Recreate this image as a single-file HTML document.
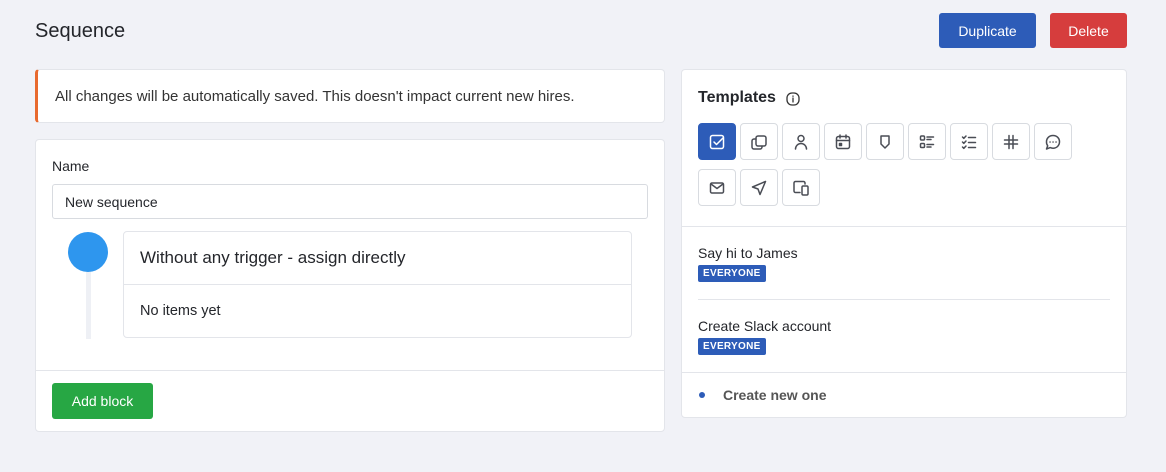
<!DOCTYPE html>
<html><head><style>
*{box-sizing:border-box;margin:0;padding:0}
body{width:1166px;height:472px;background:#f1f2f7;font-family:"Liberation Sans",sans-serif;color:#24262b;position:relative;overflow:hidden}
.abs{position:absolute}
.card{position:absolute;background:#fff;border:1px solid #e3e5ea;border-radius:4px}
.btn{position:absolute;color:#fff;font-size:14px;border-radius:3px;display:flex;align-items:center;justify-content:center}
.ic{position:absolute;width:38px;height:37px;border:1px solid #d8dbe0;border-radius:4px;background:#fff;display:flex;align-items:center;justify-content:center}
.ic svg{width:18px;height:18px;fill:none;stroke:#4a4d55;stroke-width:1.5;stroke-linecap:round;stroke-linejoin:round}
.badge{position:absolute;background:#2d5cb8;color:#fff;font-size:10px;font-weight:bold;padding:3px 5px;border-radius:2px;letter-spacing:.3px}
</style></head><body>
<div class="abs" style="left:35px;top:20px;font-size:20px">Sequence</div>
<div class="btn" style="left:939px;top:13px;width:97px;height:35px;background:#2d5cb8">Duplicate</div>
<div class="btn" style="left:1050px;top:13px;width:77px;height:35px;background:#d63d3d">Delete</div>

<div class="card" style="left:35px;top:69px;width:630px;height:54px;border-left:3px solid #e86a2f"></div>
<div class="abs" style="left:55px;top:88px;font-size:15px;color:#333">All changes will be automatically saved. This doesn't impact current new hires.</div>

<div class="card" style="left:35px;top:139px;width:630px;height:293px"></div>
<div class="abs" style="left:52px;top:158px;font-size:14px">Name</div>
<div class="abs" style="left:52px;top:184px;width:596px;height:35px;border:1px solid #d8dbe0;border-radius:3px;padding:9px 12px;font-size:14px">New sequence</div>
<div class="abs" style="left:86px;top:262px;width:5px;height:77px;background:#eef0f5"></div>
<div class="abs" style="left:68px;top:232px;width:40px;height:40px;border-radius:50%;background:#2e96ee"></div>
<div class="card" style="left:123px;top:231px;width:509px;height:107px"></div>
<div class="abs" style="left:140px;top:248px;font-size:17px">Without any trigger - assign directly</div>
<div class="abs" style="left:124px;top:284px;width:507px;height:1px;background:#e3e5ea"></div>
<div class="abs" style="left:140px;top:303px;font-size:14.5px">No items yet</div>
<div class="abs" style="left:36px;top:370px;width:628px;height:1px;background:#e3e5ea"></div>
<div class="btn" style="left:52px;top:383px;width:101px;height:36px;background:#27a744">Add block</div>

<div class="card" style="left:681px;top:69px;width:446px;height:349px"></div>
<div class="abs" style="left:698px;top:89px;font-size:16px;font-weight:bold">Templates</div>
<svg class="abs" style="left:786px;top:92px" width="14" height="14" viewBox="0 0 14 14"><rect x="1" y="1" width="12" height="12" rx="5" fill="none" stroke="#333" stroke-width="1.3"/><path d="M7 6v4M7 4v.3" stroke="#333" stroke-width="1.3" stroke-linecap="round"/></svg>

<div class="ic" style="left:698px;top:123px;background:#2d5cb8;border-color:#2d5cb8"><svg viewBox="0 0 18 18" style="stroke:#fff"><rect x="2.5" y="2.5" width="13" height="13" rx="2"/><path d="M6 9l2.5 2.5L15 5"/></svg></div>
<div class="ic" style="left:740px;top:123px"><svg viewBox="0 0 18 18"><rect x="6" y="3" width="10" height="10" rx="2"/><path d="M12 13v1a2 2 0 0 1-2 2H4a2 2 0 0 1-2-2V8a2 2 0 0 1 2-2h2"/></svg></div>
<div class="ic" style="left:782px;top:123px"><svg viewBox="0 0 18 18"><circle cx="9" cy="5.5" r="3"/><path d="M3.5 16a5.5 5.5 0 0 1 11 0"/></svg></div>
<div class="ic" style="left:824px;top:123px"><svg viewBox="0 0 18 18"><rect x="2.5" y="3.5" width="13" height="12" rx="2"/><path d="M2.5 7.5h13M6 2v3M12 2v3"/><rect x="5.5" y="10.5" width="2" height="2" fill="#4a4d55"/></svg></div>
<div class="ic" style="left:866px;top:123px"><svg viewBox="0 0 18 18"><path d="M5 3h8v8l-4 4-4-4z"/></svg></div>
<div class="ic" style="left:908px;top:123px"><svg viewBox="0 0 18 18"><rect x="2.5" y="3" width="4" height="4" rx="1"/><rect x="2.5" y="10.5" width="4" height="4" rx="1"/><path d="M9 4h6.5M9 6.5h4M9 11.5h6.5M9 14h4"/></svg></div>
<div class="ic" style="left:950px;top:123px"><svg viewBox="0 0 18 18"><path d="M2.5 4l1.3 1.3L6 3M2.5 9l1.3 1.3L6 8M2.5 14l1.3 1.3L6 13M8.5 4.5h7M8.5 9.5h7M8.5 14.5h7"/></svg></div>
<div class="ic" style="left:992px;top:123px"><svg viewBox="0 0 18 18"><path d="M7 2.5v13M11 2.5v13M2.5 7h13M2.5 11h13"/></svg></div>
<div class="ic" style="left:1034px;top:123px"><svg viewBox="0 0 18 18"><path d="M9 2.5c3.8 0 6.5 2.7 6.5 6.3S12.8 15.2 9 15.2c-1 0-2-.2-2.8-.6L2.5 16l1.2-3.2A6 6 0 0 1 2.5 8.8C2.5 5.2 5.2 2.5 9 2.5z"/><path d="M6 9h.1M9 9h.1M12 9h.1"/></svg></div>
<div class="ic" style="left:698px;top:169px"><svg viewBox="0 0 18 18"><rect x="2.5" y="4" width="13" height="10" rx="1.5"/><path d="M3 5l6 4.5L15 5"/></svg></div>
<div class="ic" style="left:740px;top:169px"><svg viewBox="0 0 18 18"><path d="M15.5 2.5L2.5 8l5.5 2 2 5.5z"/></svg></div>
<div class="ic" style="left:782px;top:169px"><svg viewBox="0 0 18 18"><path d="M13 5V4a1.5 1.5 0 0 0-1.5-1.5h-8A1.5 1.5 0 0 0 2 4v8a1.5 1.5 0 0 0 1.5 1.5H8"/><rect x="10" y="7" width="6" height="9" rx="1.2"/></svg></div>

<div class="abs" style="left:682px;top:226px;width:444px;height:1px;background:#e3e5ea"></div>
<div class="abs" style="left:698px;top:245px;font-size:14px">Say hi to James</div>
<div class="badge" style="left:698px;top:265px">EVERYONE</div>
<div class="abs" style="left:698px;top:299px;width:412px;height:1px;background:#e3e5ea"></div>
<div class="abs" style="left:698px;top:318px;font-size:14px">Create Slack account</div>
<div class="badge" style="left:698px;top:338px">EVERYONE</div>
<div class="abs" style="left:682px;top:372px;width:444px;height:1px;background:#e3e5ea"></div>
<div class="abs" style="left:699px;top:392px;width:6px;height:6px;border-radius:50%;background:#2d5cb8"></div>
<div class="abs" style="left:723px;top:387px;font-size:14px;font-weight:bold;color:#555">Create new one</div>
</body></html>
